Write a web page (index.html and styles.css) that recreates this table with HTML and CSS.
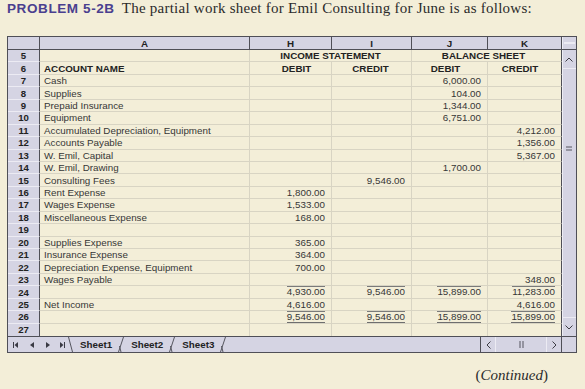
FILE: index.html
```html
<!DOCTYPE html>
<html>
<head>
<meta charset="utf-8">
<link rel="stylesheet" href="styles.css">
</head>
<body>
<div class="title"><span class="prob">PROBLEM 5-2B</span><span class="lead">The partial work sheet for Emil Consulting for June is as follows:</span></div>

<div class="sheet">
  <div class="sheet-main">
    <div class="grid">
      <div class="hrow">
        <div class="hc hn"></div>
        <div class="hc a">A</div>
        <div class="hc h">H</div>
        <div class="hc i">I</div>
        <div class="hc j">J</div>
        <div class="hc k">K</div>
      </div>
      <div class="body">
        <div class="row"><div class="c n">5</div><div class="c a"></div><div class="c hi bold">INCOME STATEMENT</div><div class="c jk bold">BALANCE SHEET</div></div>
        <div class="row"><div class="c n">6</div><div class="c a bold">ACCOUNT NAME</div><div class="c h bold hd-h">DEBIT</div><div class="c i bold hd-i">CREDIT</div><div class="c j bold hd-j">DEBIT</div><div class="c k bold hd-k">CREDIT</div></div>
        <div class="row"><div class="c n">7</div><div class="c a">Cash</div><div class="c h num"></div><div class="c i num"></div><div class="c j num">6,000.00</div><div class="c k num"></div></div>
        <div class="row"><div class="c n">8</div><div class="c a">Supplies</div><div class="c h num"></div><div class="c i num"></div><div class="c j num">104.00</div><div class="c k num"></div></div>
        <div class="row"><div class="c n">9</div><div class="c a">Prepaid Insurance</div><div class="c h num"></div><div class="c i num"></div><div class="c j num">1,344.00</div><div class="c k num"></div></div>
        <div class="row"><div class="c n">10</div><div class="c a">Equipment</div><div class="c h num"></div><div class="c i num"></div><div class="c j num">6,751.00</div><div class="c k num"></div></div>
        <div class="row"><div class="c n">11</div><div class="c a">Accumulated Depreciation, Equipment</div><div class="c h num"></div><div class="c i num"></div><div class="c j num"></div><div class="c k num">4,212.00</div></div>
        <div class="row"><div class="c n">12</div><div class="c a">Accounts Payable</div><div class="c h num"></div><div class="c i num"></div><div class="c j num"></div><div class="c k num">1,356.00</div></div>
        <div class="row"><div class="c n">13</div><div class="c a">W. Emil, Capital</div><div class="c h num"></div><div class="c i num"></div><div class="c j num"></div><div class="c k num">5,367.00</div></div>
        <div class="row"><div class="c n">14</div><div class="c a">W. Emil, Drawing</div><div class="c h num"></div><div class="c i num"></div><div class="c j num">1,700.00</div><div class="c k num"></div></div>
        <div class="row"><div class="c n">15</div><div class="c a">Consulting Fees</div><div class="c h num"></div><div class="c i num">9,546.00</div><div class="c j num"></div><div class="c k num"></div></div>
        <div class="row"><div class="c n">16</div><div class="c a">Rent Expense</div><div class="c h num">1,800.00</div><div class="c i num"></div><div class="c j num"></div><div class="c k num"></div></div>
        <div class="row"><div class="c n">17</div><div class="c a">Wages Expense</div><div class="c h num">1,533.00</div><div class="c i num"></div><div class="c j num"></div><div class="c k num"></div></div>
        <div class="row"><div class="c n">18</div><div class="c a">Miscellaneous Expense</div><div class="c h num">168.00</div><div class="c i num"></div><div class="c j num"></div><div class="c k num"></div></div>
        <div class="row"><div class="c n">19</div><div class="c a"></div><div class="c h num"></div><div class="c i num"></div><div class="c j num"></div><div class="c k num"></div></div>
        <div class="row"><div class="c n">20</div><div class="c a">Supplies Expense</div><div class="c h num">365.00</div><div class="c i num"></div><div class="c j num"></div><div class="c k num"></div></div>
        <div class="row"><div class="c n">21</div><div class="c a">Insurance Expense</div><div class="c h num">364.00</div><div class="c i num"></div><div class="c j num"></div><div class="c k num"></div></div>
        <div class="row"><div class="c n">22</div><div class="c a">Depreciation Expense, Equipment</div><div class="c h num">700.00</div><div class="c i num"></div><div class="c j num"></div><div class="c k num"></div></div>
        <div class="row"><div class="c n">23</div><div class="c a">Wages Payable</div><div class="c h num"></div><div class="c i num"></div><div class="c j num"></div><div class="c k num">348.00</div></div>
        <div class="row"><div class="c n">24</div><div class="c a"></div><div class="c h num"><span class="tot">4,930.00</span></div><div class="c i num"><span class="tot">9,546.00</span></div><div class="c j num"><span class="tot">15,899.00</span></div><div class="c k num"><span class="tot">11,283.00</span></div></div>
        <div class="row"><div class="c n">25</div><div class="c a">Net Income</div><div class="c h num">4,616.00</div><div class="c i num"></div><div class="c j num"></div><div class="c k num">4,616.00</div></div>
        <div class="row"><div class="c n">26</div><div class="c a"></div><div class="c h num"><span class="tot grand">9,546.00</span></div><div class="c i num"><span class="tot grand">9,546.00</span></div><div class="c j num"><span class="tot grand">15,899.00</span></div><div class="c k num"><span class="tot grand">15,899.00</span></div></div>
        <div class="row last"><div class="c n">27</div><div class="c a"></div><div class="c h num"></div><div class="c i num"></div><div class="c j num"></div><div class="c k num"></div></div>
      </div>
    </div>
    <div class="vscroll">
      <div class="vs-top"><span class="vs-top-line"></span></div>
      <div class="vs-btn vs-up"><svg width="8" height="5" viewBox="0 0 8 5"><polyline points="0.5,4.5 4,1 7.5,4.5" fill="none" stroke="#3c3c44" stroke-width="1"/></svg></div>
      <div class="vs-track"><svg class="grip" width="8" height="5" viewBox="0 0 8 5"><line x1="1" y1="1" x2="7" y2="1" stroke="#55555e" stroke-width="1"/><line x1="1" y1="4" x2="7" y2="4" stroke="#55555e" stroke-width="1"/></svg></div>
      <div class="vs-btn vs-down"><svg width="8" height="5" viewBox="0 0 8 5"><polyline points="0.5,0.5 4,4 7.5,0.5" fill="none" stroke="#3c3c44" stroke-width="1"/></svg></div>
    </div>
  </div>
  <div class="tabs">
    <div class="nav">
      <svg width="5" height="6" viewBox="0 0 5 6"><rect x="0" y="0" width="1" height="6" fill="#3a3a44"/><polygon points="5,0 5,6 1.5,3" fill="#3a3a44"/></svg>
      <svg width="4" height="6" viewBox="0 0 4 6"><polygon points="4,0 4,6 0,3" fill="#3a3a44"/></svg>
      <svg width="4" height="6" viewBox="0 0 4 6"><polygon points="0,0 0,6 4,3" fill="#3a3a44"/></svg>
      <svg width="5" height="6" viewBox="0 0 5 6"><polygon points="0,0 0,6 3.5,3" fill="#3a3a44"/><rect x="4" y="0" width="1" height="6" fill="#3a3a44"/></svg>
    </div>
    <svg class="sep" width="5" height="15" viewBox="0 0 5 15"><line x1="0.5" y1="0" x2="4.5" y2="15" stroke="#55555e" stroke-width="1"/></svg>
    <div class="tab active">Sheet1</div>
    <svg class="sep" width="6" height="15" viewBox="0 0 6 15"><line x1="0.5" y1="15" x2="5.5" y2="0" stroke="#55555e" stroke-width="1"/><line x1="1.5" y1="9" x2="3" y2="15" stroke="#55555e" stroke-width="1"/></svg>
    <div class="tab">Sheet2</div>
    <svg class="sep" width="6" height="15" viewBox="0 0 6 15"><line x1="0.5" y1="15" x2="5.5" y2="0" stroke="#55555e" stroke-width="1"/><line x1="1.5" y1="9" x2="3" y2="15" stroke="#55555e" stroke-width="1"/></svg>
    <div class="tab">Sheet3</div>
    <svg class="sep" width="6" height="15" viewBox="0 0 6 15"><line x1="0.5" y1="15" x2="5.5" y2="0" stroke="#55555e" stroke-width="1"/><line x1="1.5" y1="9" x2="3" y2="15" stroke="#55555e" stroke-width="1"/></svg>
    <div class="hscroll">
      <div class="hs-btn"><svg width="5" height="8" viewBox="0 0 5 8"><polyline points="4.5,0.5 1,4 4.5,7.5" fill="none" stroke="#3c3c44" stroke-width="1"/></svg></div>
      <div class="hs-track"><svg width="5" height="7" viewBox="0 0 5 7"><line x1="1" y1="0" x2="1" y2="7" stroke="#55555e"/><line x1="4" y1="0" x2="4" y2="7" stroke="#55555e"/></svg></div>
      <div class="hs-btn"><svg width="5" height="8" viewBox="0 0 5 8"><polyline points="0.5,0.5 4,4 0.5,7.5" fill="none" stroke="#3c3c44" stroke-width="1"/></svg></div>
    </div>
    <div class="corner"></div>
  </div>
</div>

<div class="cont">(<i>Continued</i>)</div>
</body>
</html>
```

FILE: styles.css
```css
html, body {
  margin: 0;
  padding: 0;
  background: #f3eed8;
}
body {
  width: 585px;
  height: 389px;
  overflow: hidden;
  padding-left: 7px;
  box-sizing: border-box;
  font-family: "Liberation Sans", Arial, sans-serif;
  color: #333;
}
.title {
  display: flex;
  align-items: baseline;
  gap: 7px;
  height: 17px;
  line-height: 17px;
  white-space: nowrap;
}
.prob {
  font: bold 13.5px/17px "Liberation Sans", Arial, sans-serif;
  letter-spacing: 0.6px;
  color: #4a3f8f;
}
.lead {
  font: 15px/17px "Liberation Serif", "Times New Roman", serif;
  letter-spacing: 0.25px;
  color: #2b2b2b;
}
.sheet {
  margin-top: 19px;
  width: 570px;
  box-sizing: border-box;
  border: 1px solid #4f4f57;
}
.sheet-main {
  display: flex;
}
.grid {
  width: 554px;
  display: flex;
  flex-direction: column;
}
.hrow {
  display: flex;
  height: 13px;
  box-sizing: border-box;
  border-bottom: 1px solid #4f4f57;
}
.hc {
  box-sizing: border-box;
  background: #d5d4e3;
  border-right: 1px solid #4f4f57;
  display: flex;
  align-items: center;
  justify-content: center;
  font-weight: bold;
  font-size: 9.8px;
  color: #222;
}
.hn { width: 32px; }
.a { width: 210px; }
.h { width: 82px; }
.i { width: 80px; }
.j { width: 76px; }
.k { width: 74px; }
.hi { width: 162px; justify-content: center; }
.jk { width: 150px; justify-content: center; padding-right: 6px; border-right-color: #4f4f57 !important; }
.body {
  height: 286px;
  display: flex;
  flex-direction: column;
}
.row {
  flex: 1 1 0;
  display: flex;
  min-height: 0;
}
.c {
  box-sizing: border-box;
  border-right: 1px solid #d8d4c3;
  border-bottom: 1px solid #d8d4c3;
  display: flex;
  align-items: center;
  font-size: 9.8px;
  color: #363636;
  white-space: nowrap;
  overflow: hidden;
}
.row.last .c { border-bottom: none; }
.c.n {
  width: 32px;
  background: #d5d4e3;
  border-right: 1px solid #4f4f57;
  border-bottom: 1px solid #ecebf3;
  justify-content: center;
  font-weight: bold;
  color: #222;
  font-size: 9.6px;
}
.c.a { padding-left: 4px; }
.c.k { border-right-color: #4f4f57; }
.bold { font-weight: bold; color: #222; }
.num { justify-content: flex-end; padding-right: 6px; }
.hd-h { justify-content: center; padding-left: 12px; }
.hd-i { justify-content: center; padding-right: 2px; }
.hd-j { justify-content: center; padding-right: 8px; }
.hd-k { justify-content: center; padding-right: 9px; }
.tot {
  display: inline-block;
  line-height: 10px;
  border-top: 1px solid #7a7a7a;
  align-self: flex-start;
  margin-top: 0;
}
.grand {
  border-bottom: 3px double #6e6e6e;
}
.vscroll {
  width: 14px;
  background: #d5d4e3;
  display: flex;
  flex-direction: column;
  box-shadow: inset 1px 0 0 #eeeef5;
}
.vs-top {
  height: 13px;
  box-sizing: border-box;
  border-bottom: 1px solid #4f4f57;
  display: flex;
  align-items: center;
  justify-content: center;
}
.vs-top-line {
  width: 11px;
  height: 2px;
  background: #ecebf3;
}
.vs-btn {
  height: 18px;
  display: flex;
  align-items: center;
  justify-content: center;
}
.vs-up { border-bottom: 1px solid #ecebf3; }
.vs-down { border-top: 1px solid #ecebf3; }
.vs-track {
  flex: 1;
  display: flex;
  flex-direction: column;
  align-items: center;
  padding-top: 77px;
}
.grip { display: block; }
.tabs {
  height: 16px;
  box-sizing: border-box;
  border-top: 1px solid #4f4f57;
  background: #d5d4e3;
  display: flex;
  align-items: stretch;
}
.nav {
  width: 60px;
  display: flex;
  align-items: center;
  gap: 0;
  padding-left: 5px;
  box-sizing: border-box;
}
.nav svg:nth-child(1) { margin-right: 12px; }
.nav svg:nth-child(2) { margin-right: 12px; }
.nav svg:nth-child(3) { margin-right: 10px; }
.sep { display: block; flex: none; }
.tab {
  display: flex;
  align-items: center;
  font-weight: bold;
  font-size: 9.8px;
  color: #222;
  padding: 0 6px 0 7px;
}
.tab.active { padding-left: 7px; }
.hscroll {
  margin-left: auto;
  width: 81px;
  box-sizing: border-box;
  border-left: 1px solid #4f4f57;
  display: flex;
  align-items: center;
}
.hs-btn {
  width: 14px;
  display: flex;
  align-items: center;
  justify-content: center;
  height: 100%;
}
.hs-track {
  flex: 1;
  height: 100%;
  display: flex;
  align-items: center;
  justify-content: center;
  border-left: 1px solid #ecebf3;
  border-right: 1px solid #ecebf3;
}
.corner {
  width: 15px;
  box-sizing: border-box;
  border-left: 1px solid #4f4f57;
}
.cont {
  margin-top: 14px;
  text-align: right;
  padding-right: 37px;
  font: 15px/17px "Liberation Serif", "Times New Roman", serif;
  color: #2b2b2b;
}
```
